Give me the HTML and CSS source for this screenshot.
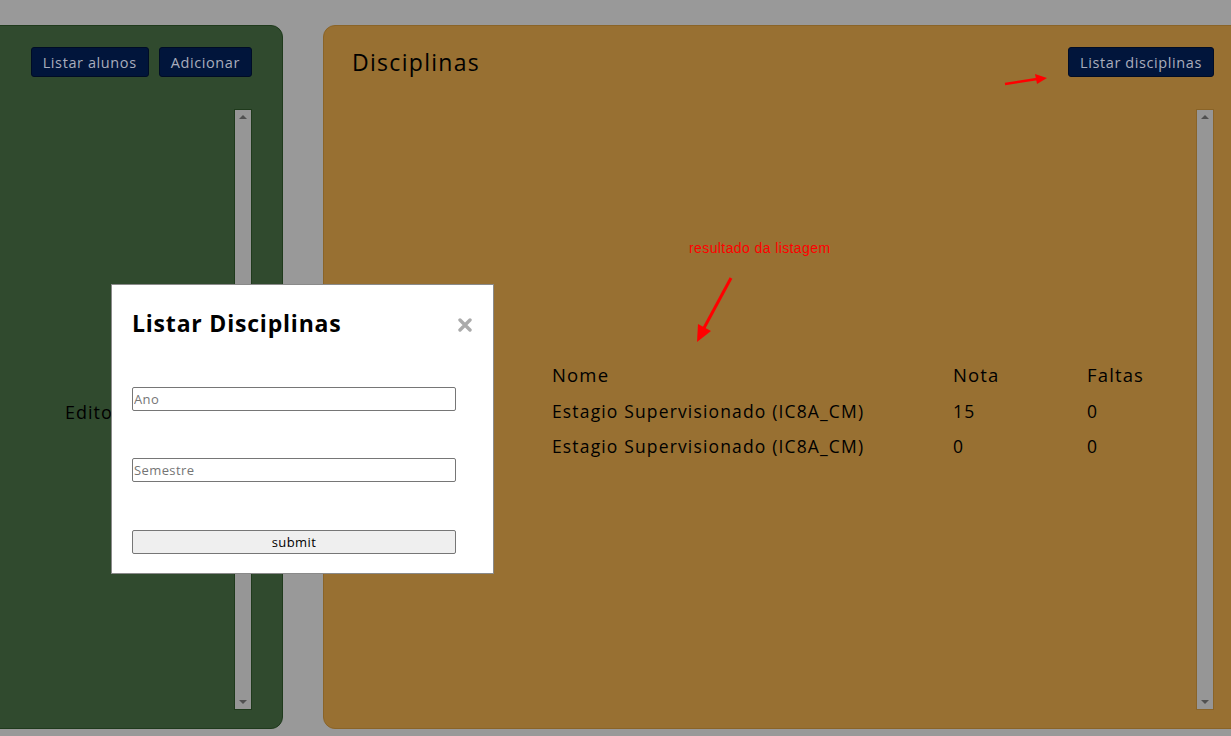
FILE: index.html
```html
<!DOCTYPE html>
<html lang="pt">
<head>
<meta charset="utf-8">
<title>Disciplinas</title>
<link rel="stylesheet" href="styles.css">
</head>
<body>
<div class="page">
  <section class="panel panel-green">
    <div class="panel-head panel-head-end">
      <button class="btn">Listar alunos</button>
      <button class="btn">Adicionar</button>
    </div>
    <div class="scrollbox">
      <div class="scroll-content">
        <p class="edit-label">Editor</p>
      </div>
      <div class="fake-scrollbar bar-green">
        <span class="arrow-up"></span>
        <span class="arrow-down"></span>
      </div>
    </div>
  </section>

  <section class="panel panel-orange">
    <div class="panel-head">
      <h2 class="panel-title">Disciplinas</h2>
      <button class="btn">Listar disciplinas</button>
    </div>
    <div class="scrollbox">
      <div class="scroll-content">
        <div class="table">
          <div class="th">Nome</div><div class="th">Nota</div><div class="th">Faltas</div>
          <div class="td">Estagio Supervisionado (IC8A_CM)</div><div class="td">15</div><div class="td">0</div>
          <div class="td">Estagio Supervisionado (IC8A_CM)</div><div class="td">0</div><div class="td">0</div>
        </div>
      </div>
      <div class="fake-scrollbar bar-orange">
        <span class="arrow-up"></span>
        <span class="arrow-down"></span>
      </div>
    </div>
  </section>
</div>

<div class="modal">
  <div class="modal-head">
    <h2 class="modal-title">Listar Disciplinas</h2>
    <svg class="close" width="14" height="14" viewBox="0 0 14 14"><path d="M2 2 L12 12 M12 2 L2 12" stroke="#aaaaaa" stroke-width="3.4" stroke-linecap="round"/></svg>
  </div>
  <form class="modal-form">
    <input class="field" type="text" placeholder="Ano">
    <input class="field" type="text" placeholder="Semestre">
    <button type="button" class="submit">submit</button>
  </form>
</div>

<div class="note">resultado da listagem</div>
<svg class="arrow arrow-right" width="50" height="16" viewBox="0 0 50 16"><path d="M2 12 L34 7" stroke="#ff0000" stroke-width="2.5"/><path d="M32 2 L44 6 L34 12 Z" fill="#ff0000"/></svg>
<svg class="arrow arrow-down-left" width="44" height="70" viewBox="0 0 44 70"><path d="M37 2 L10 52" stroke="#ff0000" stroke-width="3"/><path d="M3 66 L4 48 L17 55 Z" fill="#ff0000"/></svg>
</body>
</html>
```
FILE: styles.css
```css
html, body {
  margin: 0;
  padding: 0;
  overflow: hidden;
  background: #999999;
}
body {
  width: 1231px;
  height: 736px;
  font-family: "Open Sans", "Liberation Sans", sans-serif;
}
.page {
  display: flex;
  gap: 40px;
  padding-top: 25px;
  margin-left: -17px;
}
.panel {
  box-sizing: border-box;
  height: 704px;
  border-radius: 12px;
  padding: 21px 30px 18px 30px;
  display: flex;
  flex-direction: column;
  gap: 32px;
  flex-shrink: 0;
}
.panel-green {
  width: 300px;
  background: #304a2e;
  border: 1px solid #1f3a1c;
}
.panel-orange {
  width: 922px;
  background: #987032;
  border: 1px solid #8a6428;
}
.panel-head {
  display: flex;
  align-items: center;
  justify-content: space-between;
  height: 30px;
}
.panel-head-end {
  justify-content: flex-end;
  gap: 10px;
}
.panel-title {
  margin: 0 0 0 -2px;
  font-weight: 400;
  font-size: 23px;
  letter-spacing: 1.3px;
  color: #000;
}
.btn {
  height: 30px;
  padding: 0 11px;
  border: 1px solid #000c26;
  border-radius: 3px;
  background: #01153b;
  color: #a9adbd;
  font-family: inherit;
  font-size: 14.5px;
  letter-spacing: 0.6px;
}
.scrollbox {
  flex: 1;
  display: flex;
  min-height: 0;
}
.scroll-content {
  flex: 1;
  position: relative;
}
.fake-scrollbar {
  width: 16px;
  background: #969696;
  position: relative;
}
.bar-green { border: 1px solid #1f3a1c; }
.bar-orange { border: 1px solid #8a6428; }
.arrow-up, .arrow-down {
  position: absolute;
  left: 4px;
  width: 0;
  height: 0;
  border-left: 4px solid transparent;
  border-right: 4px solid transparent;
}
.arrow-up {
  top: 5px;
  border-bottom: 4px solid #505050;
}
.arrow-down {
  bottom: 5px;
  border-top: 4px solid #505050;
}
.edit-label {
  margin: 291px 0 0 51px;
  font-size: 18px;
  letter-spacing: 1px;
  color: #000;
}
.table {
  display: grid;
  grid-template-columns: 401px 134px auto;
  margin: 254px 0 0 198px;
  font-size: 17.5px;
  letter-spacing: 1.15px;
  color: #000;
}
.th, .td {
  height: 35.5px;
  line-height: 24px;
}
.th { font-weight: 500; font-size: 18.5px; }
.modal {
  position: absolute;
  left: 111px;
  top: 284px;
  width: 383px;
  height: 290px;
  box-sizing: border-box;
  background: #fff;
  border: 1px solid #8a8a8a;
  padding: 21px 20px 0 20px;
}
.modal-head {
  display: flex;
  justify-content: space-between;
  align-items: center;
  height: 34px;
}
.modal-title {
  margin: 0;
  font-size: 23px;
  font-weight: 700;
  letter-spacing: 0.8px;
  color: #000;
}
.close { margin-right: 1px; margin-top: 4px; }
.modal-form {
  display: flex;
  flex-direction: column;
  align-items: flex-start;
  margin-top: 47px;
}
.field {
  box-sizing: border-box;
  width: 324px;
  height: 24px;
  margin: 0 0 47px 0;
  padding: 0 1px;
  border: 1px solid #767676;
  border-radius: 2px;
  font-family: inherit;
  font-size: 13px;
  letter-spacing: 0.4px;
  color: #000;
}
.field::placeholder { color: #757575; }
.field:nth-child(2) { margin-bottom: 48px; }
.submit {
  box-sizing: border-box;
  width: 324px;
  height: 24px;
  border: 1px solid #767676;
  border-radius: 2px;
  background: #efefef;
  font-family: inherit;
  font-size: 13px;
  letter-spacing: 0.4px;
  color: #000;
}
.note {
  position: absolute;
  left: 689px;
  top: 240px;
  font-family: "Liberation Sans", sans-serif;
  font-size: 14px;
  letter-spacing: 0.4px;
  color: #ff0000;
}
.arrow { position: absolute; }
.arrow-right { left: 1003px; top: 72px; }
.arrow-down-left { left: 694px; top: 276px; }
```
